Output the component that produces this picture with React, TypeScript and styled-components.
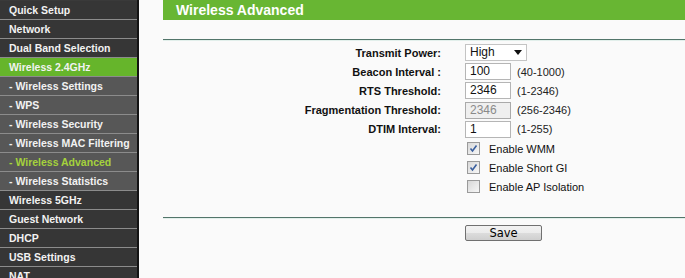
import React from 'react';
import styled, { createGlobalStyle } from 'styled-components';

const GlobalStyle = createGlobalStyle`
  html, body {
    margin: 0;
    padding: 0;
    background: #fafafa;
    font-family: "Liberation Sans", Arial, sans-serif;
  }
`;

const Page = styled.div`
  display: flex;
  width: 685px;
  height: 278px;
  overflow: hidden;
  background: #fafafa;
`;

const Menu = styled.div`
  width: 137px;
  flex-shrink: 0;
  background: #3a3a3a;
  border-right: 2px solid #141414;
  padding-top: 1px;
`;

const MenuItem = styled.div<{ sub?: boolean; active?: boolean; current?: boolean }>`
  height: 18px;
  line-height: 18px;
  border-bottom: 1px solid #8c8c8c;
  padding-left: 9px;
  font-size: 10.5px;
  font-weight: bold;
  white-space: nowrap;
  overflow: hidden;
  color: ${(p) => (p.current ? '#a5d23c' : '#f2f2f2')};
  background: ${(p) => (p.active ? '#66b52b' : p.sub ? '#575757' : '#363636')};
`;

const Main = styled.div`
  flex: 1;
  padding-left: 24px;
  display: flex;
  flex-direction: column;
`;

const Title = styled.div`
  height: 20px;
  line-height: 20px;
  background: #68b633;
  color: #fff;
  font-size: 14px;
  font-weight: bold;
  padding-left: 13px;
`;

const Rule = styled.div<{ top: number }>`
  margin-top: ${(p) => p.top}px;
  height: 1px;
  background: #52756a;
  border-bottom: 1px solid #e2efeb;
`;

const Form = styled.div`
  display: grid;
  grid-template-columns: 278px auto;
  column-gap: 24px;
  grid-auto-rows: 19.2px;
  padding-top: 2px;
  font-size: 11px;
  color: #111;
`;

const Label = styled.div`
  text-align: right;
  font-weight: bold;
  display: flex;
  align-items: center;
  justify-content: flex-end;
`;

const Cell = styled.div`
  display: flex;
  align-items: center;
  gap: 6px;
`;

const Input = styled.div<{ disabled?: boolean }>`
  width: 40px;
  height: 15px;
  line-height: 15px;
  padding-left: 4px;
  border: 1px solid ${(p) => (p.disabled ? '#aaa' : '#b5b5b5')};
  background: ${(p) => (p.disabled ? '#efefef' : '#fff')};
  color: ${(p) => (p.disabled ? '#8a8a8a' : '#111')};
  font-size: 12px;
`;

const Select = styled.div`
  width: 52px;
  height: 15px;
  line-height: 15px;
  padding: 0 4px;
  border: 1px solid #c4c4c4;
  background: #fff;
  font-size: 12px;
  display: flex;
  align-items: center;
  justify-content: space-between;
`;

const Hint = styled.span`
  font-size: 11px;
  color: #222;
`;

const CheckRow = styled.div`
  display: flex;
  align-items: center;
  padding-left: 2px;
  gap: 9px;
  font-size: 11px;
`;

const Box = styled.span`
  width: 11px;
  height: 11px;
  border: 1px solid #9a9a9a;
  background: linear-gradient(135deg, #d8d8d8, #f7f7f7);
  display: flex;
  align-items: center;
  justify-content: center;
`;

const Actions = styled.div`
  padding: 6px 0 0 302px;
`;

const Button = styled.div`
  width: 75px;
  height: 14px;
  line-height: 14px;
  text-align: center;
  border: 1px solid #707070;
  border-radius: 2px;
  background: linear-gradient(#f2f2f2, #ebebeb 50%, #dcdcdc 51%, #cfcfcf);
  font-family: Tahoma, "DejaVu Sans", sans-serif;
  font-size: 11.5px;
  color: #000;
`;

const menu = [
  { t: 'Quick Setup' },
  { t: 'Network' },
  { t: 'Dual Band Selection' },
  { t: 'Wireless 2.4GHz', active: true },
  { t: '- Wireless Settings', sub: true },
  { t: '- WPS', sub: true },
  { t: '- Wireless Security', sub: true },
  { t: '- Wireless MAC Filtering', sub: true },
  { t: '- Wireless Advanced', sub: true, current: true },
  { t: '- Wireless Statistics', sub: true },
  { t: 'Wireless 5GHz' },
  { t: 'Guest Network' },
  { t: 'DHCP' },
  { t: 'USB Settings' },
  { t: 'NAT' },
];

const fields = [
  { label: 'Beacon Interval :', value: '100', hint: '(40-1000)' },
  { label: 'RTS Threshold:', value: '2346', hint: '(1-2346)' },
  { label: 'Fragmentation Threshold:', value: '2346', hint: '(256-2346)', disabled: true },
  { label: 'DTIM Interval:', value: '1', hint: '(1-255)' },
];

const checks = [
  { label: 'Enable WMM', on: true },
  { label: 'Enable Short GI', on: true },
  { label: 'Enable AP Isolation', on: false },
];

const Tick = () => (
  <svg width="9" height="9" viewBox="0 0 9 9">
    <path d="M1.5 4.5 L3.5 7 L7.5 1.5" fill="none" stroke="#3a5f9e" strokeWidth="1.6" />
  </svg>
);

const App: React.FC = () => (
  <Page>
    <GlobalStyle />
    <Menu>
      {menu.map((m) => (
        <MenuItem key={m.t} sub={m.sub} active={m.active} current={m.current}>
          {m.t}
        </MenuItem>
      ))}
    </Menu>
    <Main>
      <Title>Wireless Advanced</Title>
      <Rule top={19} />
      <Form>
        <Label>Transmit Power:</Label>
        <Cell>
          <Select>
            High
            <svg width="8" height="5" viewBox="0 0 8 5">
              <path d="M0 0 H8 L4 5 Z" fill="#111" />
            </svg>
          </Select>
        </Cell>
        {fields.map((f) => (
          <React.Fragment key={f.label}>
            <Label>{f.label}</Label>
            <Cell>
              <Input disabled={f.disabled}>{f.value}</Input>
              <Hint>{f.hint}</Hint>
            </Cell>
          </React.Fragment>
        ))}
        {checks.map((c) => (
          <React.Fragment key={c.label}>
            <span />
            <CheckRow>
              <Box>{c.on && <Tick />}</Box>
              {c.label}
            </CheckRow>
          </React.Fragment>
        ))}
      </Form>
      <Rule top={20} />
      <Actions>
        <Button>Save</Button>
      </Actions>
    </Main>
  </Page>
);

export default App;
